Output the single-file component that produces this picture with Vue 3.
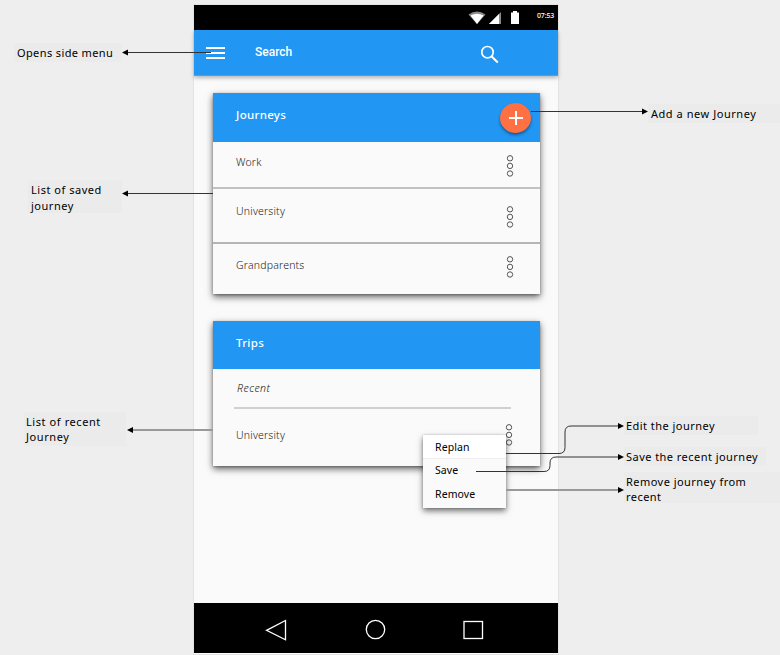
<script setup>
const journeys = [
  { name: 'Work', size: 'work' },
  { name: 'University', size: 'university' },
  { name: 'Grandparents', size: 'grandparents' },
]

const notes = [
  { id: 'menu', lines: ['Opens side menu'] },
  { id: 'saved', lines: ['List of saved', 'journey'] },
  { id: 'recent', lines: ['List of recent', 'Journey'] },
  { id: 'add', lines: ['Add a new Journey'] },
  { id: 'edit', lines: ['Edit the journey'] },
  { id: 'save', lines: ['Save the recent journey'] },
  { id: 'remove', lines: ['Remove journey from', 'recent'] },
]
</script>

<template>
  <div class="board">
    <main class="phone">
      <div class="status">
        <svg class="status-icons" width="54" height="16" viewBox="0 0 54 16">
          <path d="M0.500 4.500Q9 -1.500 17.500 4.500L9 14Z" fill="#8a8a8a" />
          <path d="M2.500 5.600Q9 2 15.500 5.600L9 14Z" fill="#fff" />
          <path d="M21 14L33 2V14Z" fill="#8a8a8a" />
          <path d="M21 14L31 4V14Z" fill="#fff" />
          <path d="M43 2.500h2V1h4v1.500h2V14h-8Z" fill="#fff" />
        </svg>
        <span class="clock">07:53</span>
      </div>
      <header class="appbar">
        <div class="burger"><i></i><i></i><i></i></div>
        <span class="search-label">Search</span>
        <svg class="search-icon" width="20" height="20" viewBox="0 0 20 20" fill="none" stroke="#fff">
          <circle cx="7.500" cy="7.200" r="5.700" stroke-width="1.700" />
          <path d="M11.700 11.400L17.800 17.400" stroke-width="2.100" />
        </svg>
      </header>

      <div class="content">
        <section class="card saved">
          <div class="card-head">
            <h2>Journeys</h2>
            <button class="fab" aria-label="Add">
              <svg width="14" height="14" viewBox="0 0 14 14"><path d="M7 0V14M0 7H14" stroke="#fff" stroke-width="2" /></svg>
            </button>
          </div>
          <div v-for="j in journeys" :key="j.name" class="row" :class="j.size">
            <span class="name">{{ j.name }}</span>
            <svg class="dots" width="8" height="24" viewBox="0 0 8 24">
              <circle v-for="n in 3" :key="n" cx="4" :cy="n * 7.600 - 3.300" r="2.700" />
            </svg>
          </div>
        </section>

        <section class="card trips">
          <div class="card-head"><h2>Trips</h2></div>
          <div class="recent-title"><em>Recent</em></div>
          <div class="row trip">
            <span class="name">University</span>
            <svg class="dots" width="8" height="24" viewBox="0 0 8 24">
              <circle v-for="n in 3" :key="n" cx="4" :cy="n * 7.600 - 3.300" r="2.700" />
            </svg>
          </div>
          <div class="popup">
            <div class="option active"><span>Replan</span></div>
            <div class="option middle"><span>Save</span></div>
            <div class="option"><span>Remove</span></div>
          </div>
        </section>
      </div>

      <nav class="navbar">
        <svg width="22" height="22" viewBox="0 0 22 22"><path d="M1.500 11.300L20.500 1.500V20.800Z" /></svg>
        <svg width="22" height="22" viewBox="0 0 22 22"><circle cx="11.500" cy="10.500" r="9.200" /></svg>
        <svg width="22" height="22" viewBox="0 0 22 22"><rect x="2" y="2.500" width="18.500" height="17" /></svg>
      </nav>
    </main>

    <div v-for="n in notes" :key="n.id" class="note" :class="n.id">
      <div v-for="(line, i) in n.lines" :key="i"><span>{{ line }}</span></div>
    </div>

    <svg class="connectors" width="780" height="655" viewBox="0 0 780 655">
      <g fill="none" stroke="#333" stroke-width="1">
        <path d="M127 52.500H211" />
        <path d="M127 193.500H213" />
        <path d="M531 111.500H643" />
        <path d="M506 453.500H559Q565 453.500 565 447.500V432Q565 426 571 426H619" />
        <path d="M476 471.500H544Q550 471.500 550 465.500V463Q550 457 556 457H619" />
      </g>
      <g fill="none" stroke="#999" stroke-width="2">
        <path d="M132 430H213M506 490H619" />
      </g>
      <g fill="#000">
        <path d="M122 52.500l6-3v6Z" />
        <path d="M122 193.500l6-3v6Z" />
        <path d="M127 430l6-3v6Z" />
        <path d="M648 111.500l-6-3v6Z" />
        <path d="M624 426l-6-3v6Z" />
        <path d="M624 457l-6-3v6Z" />
        <path d="M624 490l-6-3v6Z" />
      </g>
    </svg>
  </div>
</template>

<style>
body { margin: 0; background: #eee; }
</style>

<style scoped>
.board {
  position: relative;
  box-sizing: border-box;
  width: 780px;
  height: 655px;
  padding: 5px 0 0 194px;
  overflow: hidden;
  background: #eee;
  font-family: "Noto Sans", "Open Sans", sans-serif;
  font-size: 11px;
  color: #000;
}
.phone {
  display: flex;
  flex-direction: column;
  width: 364px;
  height: 649px;
  background: #fafafa;
  box-shadow: 0 0 0 1px #e3e3e3;
}
.status {
  display: flex;
  justify-content: flex-end;
  box-sizing: border-box;
  height: 25px;
  padding: 5px 3px 0 0;
  background: #000;
}
.status-icons { margin-right: 15px; }
.clock {
  width: 18px;
  white-space: nowrap;
  color: #fff;
  font: 500 7px/12px "Noto Sans", sans-serif;
  letter-spacing: -0.15px;
}
.appbar {
  display: flex;
  box-sizing: border-box;
  height: 46px;
  padding-left: 12px;
  background: #2196f3;
  border-bottom: 1px solid #4fa0e4;
  box-shadow: 0 2px 4px rgba(0, 0, 0, 0.28);
}
.burger {
  display: flex;
  flex-direction: column;
  gap: 3px;
  width: 19px;
  margin-top: 17px;
}
.burger i { height: 2px; background: #fff; }
.search-label {
  width: 225px;
  margin: 14px 0 0 30px;
  color: #fff;
  font: 500 12px/16px Roboto, sans-serif;
}
.search-icon { margin-top: 15px; }
.content { flex: 1; padding: 17px 18px 0 19px; }
.card {
  position: relative;
  background: #fafafa;
  box-shadow: 0 3px 7px rgba(0, 0, 0, 0.6), 0 1px 2px rgba(0, 0, 0, 0.25);
}
.saved { height: 201px; }
.trips { height: 145px; margin-top: 27px; }
.card-head {
  display: flex;
  justify-content: space-between;
  box-sizing: border-box;
  height: 49px;
  padding: 14px 9px 0 23px;
  background: #2196f3;
}
.trips .card-head { height: 48px; }
h2 {
  margin: 0;
  color: #fff;
  font-size: 11.500px;
  line-height: 16px;
  font-weight: 500;
  letter-spacing: 0.3px;
}
.fab {
  display: grid;
  place-items: center;
  width: 31px;
  height: 30px;
  margin-top: -4px;
  padding: 0;
  border: 0;
  border-radius: 50%;
  background: #ff7043;
  box-shadow: 0 2px 3px rgba(0, 0, 0, 0.4);
}
.row {
  display: flex;
  justify-content: space-between;
  align-items: flex-start;
  box-sizing: border-box;
  padding: 0 26px 0 23px;
}
.name { color: #222; font-size: 10.500px; font-weight: 300; line-height: 17px; letter-spacing: 0.2px; }
.dots { fill: none; stroke: #555; stroke-width: 1; }
.work { height: 47px; padding-top: 12px; border-bottom: 2px solid #c2c2c2; }
.university { height: 55px; padding-top: 14px; border-bottom: 2px solid #b5b5b5; }
.grandparents { height: 50px; padding-top: 13px; }
.university .dots { margin-top: 2px; }
.grandparents .dots { margin-top: -2px; }
.recent-title {
  box-sizing: border-box;
  height: 40px;
  margin: 0 29px 0 21px;
  padding: 11px 0 0 3px;
  border-bottom: 2px solid #d0d0d0;
  font-size: 10.500px;
  line-height: 17px;
}
.recent-title em { letter-spacing: 0.5px; font-weight: 300; color: #111; }
.trip { padding: 18px 27px 0 23px; }
.trip .dots { margin-top: -4px; }
.popup {
  position: absolute;
  left: 210px;
  top: 114px;
  width: 83px;
  height: 73px;
  background: #fafafa;
  box-shadow: 0 3px 6px rgba(0, 0, 0, 0.55), 0 0 2px rgba(0, 0, 0, 0.2);
}
.option { box-sizing: border-box; height: 23.500px; padding-left: 12px; font-size: 10.500px; line-height: 24px; color: #000; letter-spacing: 0.1px; }
.option.active { background: #fff; border-bottom: 1px solid #eee; }
.option.middle { line-height: 22px; }
.navbar {
  display: flex;
  align-items: center;
  justify-content: center;
  gap: 76.500px;
  box-sizing: border-box;
  height: 50px;
  margin-bottom: 1px;
  padding: 4px 3px 0 0;
  background: #000;
}
.navbar svg { fill: none; stroke: #fff; stroke-width: 1.300; }
.note {
  position: absolute;
  box-sizing: border-box;
  background: #ebebeb;
  line-height: 16px;
  letter-spacing: 0.46px;
  white-space: nowrap;
}
.note.menu { left: 14px; top: 43px; width: 108px; height: 19px; padding: 2px 0 0 3px; letter-spacing: 0.38px; }
.note.saved { left: 28px; top: 180px; width: 94px; height: 33px; padding: 2px 0 0 3px; letter-spacing: 0.52px; }
.note.recent { left: 24px; top: 412px; width: 102px; height: 34px; padding: 2px 0 0 2px; line-height: 15px; letter-spacing: 0.58px; }
.note.add { left: 648px; top: 104px; width: 132px; height: 19px; padding: 2px 0 0 3px; letter-spacing: 0.54px; }
.note.edit { left: 624px; top: 416px; width: 134px; height: 19px; padding: 2px 0 0 2px; }
.note.save { left: 624px; top: 447px; width: 142px; height: 19px; padding: 2px 0 0 2px; }
.note.remove { left: 624px; top: 472px; width: 156px; height: 31px; padding: 2px 0 0 2px; line-height: 15px; }
.connectors { position: absolute; inset: 0; }
</style>
